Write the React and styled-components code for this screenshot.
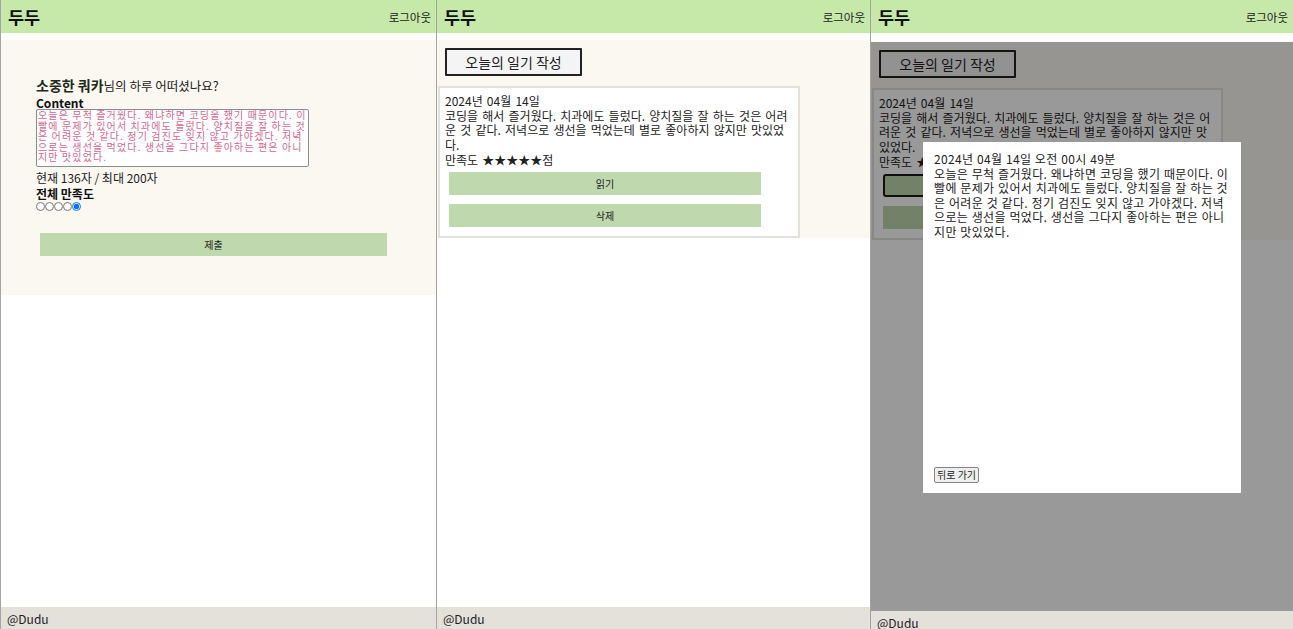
import React from "react";
import styled, { createGlobalStyle } from "styled-components";

const Global = createGlobalStyle`
  html, body { margin: 0; padding: 0; overflow: hidden; background: #fff; }
  body { font-family: "Noto Sans CJK KR", "Noto Sans", sans-serif; color: #222; }
  * { box-sizing: border-box; }
`;

const Screen = styled.div`
  display: flex;
  align-items: flex-start;
  width: 1293px;
  height: 629px;
  overflow: hidden;
`;

const Phone = styled.section`
  display: flex;
  flex-direction: column;
  flex-shrink: 0;
  width: ${(p) => p.$w}px;
  height: ${(p) => p.$h}px;
  border-left: 1px solid #a4a4a4;
`;

const Header = styled.header`
  flex-shrink: 0;
  height: 33px;
  background: #c6e9aa;
  display: flex;
  align-items: center;
  justify-content: space-between;
  padding: 0 5px 0 7px;
`;

const Logo = styled.h1`
  margin: 0;
  font-size: 17.5px;
  font-weight: 700;
  color: #111;
`;

const Logout = styled.span`
  font-size: 11.5px;
  color: #222;
`;

const Main = styled.main`
  flex: 1;
  position: relative;
  margin-top: ${(p) => p.$gap}px;
  background: #fff;
  display: flex;
  flex-direction: column;
`;

const Surface = styled.div`
  background: #fbf8f2;
  padding: ${(p) => p.$pad};
`;

const Footer = styled.footer`
  flex-shrink: 0;
  height: 22px;
  background: #e4e0da;
  display: flex;
  align-items: center;
  padding-left: 6px;
  font-size: 12px;
  color: #222;
`;

/* ---------- form ---------- */
const Form = styled.form`
  display: flex;
  flex-direction: column;
  align-items: flex-start;
`;

const Greeting = styled.p`
  margin: 0;
  line-height: 20px;
  font-size: 12.5px;
  color: #222;
  strong {
    font-size: 14px;
    font-weight: 700;
    color: #1f2b1b;
  }
`;

const Label = styled.label`
  display: block;
  font-size: 12px;
  font-weight: 700;
  line-height: ${(p) => p.$lh || 13}px;
  color: #111;
`;

const TextArea = styled.textarea`
  width: 273px;
  height: 58px;
  margin: 0;
  padding: 0 1px;
  border: 1px solid #8d8d8d;
  border-radius: 2px;
  resize: none;
  background: #fff;
  color: #d2678f;
  font-family: "Noto Sans CJK KR", sans-serif;
  font-size: 10px;
  line-height: 10.6px;
  letter-spacing: 1.15px;
  word-spacing: -0.15px;
  word-break: break-all;
  overflow: hidden;
`;

const Counter = styled.div`
  margin-top: 3px;
  font-size: 12px;
  line-height: 16px;
  color: #222;
`;

const Radios = styled.div`
  display: flex;
  height: 10px;
  align-items: center;
`;

const Radio = styled.input.attrs({ type: "radio" })`
  width: 9px;
  height: 9px;
  margin: 0;
`;

const GreenButton = styled.button`
  display: flex;
  align-items: center;
  justify-content: center;
  width: ${(p) => p.$w};
  height: 23px;
  margin: ${(p) => p.$m || 0};
  background: #bfd8ad;
  border: ${(p) => (p.$focus ? "2px solid #1a1a1a" : "none")};
  border-radius: ${(p) => (p.$focus ? "3px" : "0")};
  font-family: inherit;
  font-size: 10px;
  color: #222;
  padding: 0;
`;

/* ---------- list ---------- */
const WriteButton = styled.button`
  display: flex;
  align-items: center;
  justify-content: center;
  width: 137px;
  height: 28px;
  margin-left: 7px;
  background: #f4f4f4;
  border: 2px solid #222;
  border-radius: 1px;
  font-family: inherit;
  font-size: 14px;
  color: #222;
  padding: 0;
`;

const Card = styled.article`
  width: calc(100% - 70px);
  margin-top: 10px;
  background: #fff;
  border: 2px solid #e4e1da;
  padding: 6px 5px 9px 5px;
  display: flex;
  flex-direction: column;
`;

const CardText = styled.div`
  font-size: 12px;
  line-height: 14.7px;
  word-spacing: 1.5px;
  word-break: break-all;
  color: #222;
`;

const CardActions = styled.div`
  display: flex;
  flex-direction: column;
  gap: 9px;
  margin: 4px 0 0 4px;
`;

/* ---------- modal ---------- */
const Overlay = styled.div`
  position: absolute;
  inset: 0;
  background: rgba(0, 0, 0, 0.4);
  display: flex;
  justify-content: center;
  align-items: flex-start;
  padding-top: 100px;
`;

const Modal = styled.div`
  width: 318px;
  height: 351px;
  background: #fff;
  padding: 10px 11px 10px;
  display: flex;
  flex-direction: column;
  align-items: flex-start;
`;

const ModalText = styled.div`
  font-size: 12px;
  line-height: 14.5px;
  letter-spacing: 0.35px;
  word-spacing: 0.5px;
  word-break: break-all;
  color: #222;
`;

const BackButton = styled.button`
  margin-top: auto;
  height: 16px;
  padding: 0 2px;
  background: #efefef;
  border: 1px solid #858585;
  border-radius: 2px;
  font-family: inherit;
  font-size: 10px;
  line-height: 12px;
  color: #222;
`;

const PAGE_TEXT =
  "오늘은 무척 즐거웠다. 왜냐하면 코딩을 했기 때문이다. 이빨에 문제가 있어서 치과에도 들렀다. 양치질을 잘 하는 것은 어려운 것 같다. 정기 검진도 잊지 않고 가야겠다. 저녁으로는 생선을 먹었다. 생선을 그다지 좋아하는 편은 아니지만 맛있었다.";

const SUMMARY =
  "코딩을 해서 즐거웠다. 치과에도 들렀다. 양치질을 잘 하는 것은 어려운 것 같다. 저녁으로 생선을 먹었는데 별로 좋아하지 않지만 맛있었다.";

function Shell({ w, h, gap, children }) {
  return (
    <Phone $w={w} $h={h}>
      <Header>
        <Logo>두두</Logo>
        <Logout>로그아웃</Logout>
      </Header>
      <Main $gap={gap}>{children}</Main>
      <Footer>@Dudu</Footer>
    </Phone>
  );
}

function DiaryList({ focused }) {
  return (
    <Surface $pad="8px 0 0 1px">
      <WriteButton>오늘의 일기 작성</WriteButton>
      <Card>
        <CardText>2024년 04월 14일</CardText>
        <CardText>{SUMMARY}</CardText>
        <CardText>만족도 ★★★★★점</CardText>
        <CardActions>
          <GreenButton $w="calc(100% - 32px)" $focus={focused}>
            읽기
          </GreenButton>
          <GreenButton $w="calc(100% - 32px)">삭제</GreenButton>
        </CardActions>
      </Card>
    </Surface>
  );
}

export default function App() {
  return (
    <>
      <Global />
      <Screen>
        <Shell w={436} h={629} gap={7}>
          <Surface $pad="35px 0 39px 35px">
            <Form onSubmit={(e) => e.preventDefault()}>
              <Greeting>
                <strong>소중한 쿼카</strong>님의 하루 어떠셨나요?
              </Greeting>
              <Label htmlFor="content">Content</Label>
              <TextArea id="content" defaultValue={PAGE_TEXT} />
              <Counter>현재 136자 / 최대 200자</Counter>
              <Label $lh={15}>전체 만족도</Label>
              <Radios>
                {[1, 2, 3, 4, 5].map((n) => (
                  <Radio key={n} name="score" defaultChecked={n === 5} />
                ))}
              </Radios>
              <GreenButton $w="347px" $m="22px 0 0 4px" type="submit">
                제출
              </GreenButton>
            </Form>
          </Surface>
        </Shell>
        <Shell w={434} h={629} gap={7}>
          <DiaryList />
        </Shell>
        <Shell w={423} h={633} gap={9}>
          <DiaryList focused />
          <Overlay>
            <Modal>
              <ModalText>2024년 04월 14일 오전 00시 49분</ModalText>
              <ModalText>{PAGE_TEXT}</ModalText>
              <BackButton>뒤로 가기</BackButton>
            </Modal>
          </Overlay>
        </Shell>
      </Screen>
    </>
  );
}
